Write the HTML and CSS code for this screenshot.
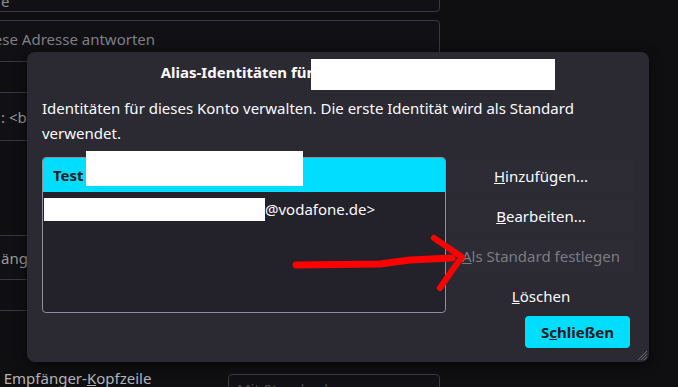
FILE: index.html
```html
<!DOCTYPE html>
<html lang="de">
<head>
    <meta charset="UTF-8">
    <meta name="viewport" content="width=device-width, initial-scale=1.0">
    <title>Alias-Identitäten</title>
    <link rel="stylesheet" href="styles.css">
</head>
<body>
    <div class="backdrop">
        <div class="field f1">e</div>
        <div class="field f2">An diese Adresse antworten</div>
        <div class="field f3">: &lt;b</div>
        <div class="field f4">änge</div>
        <div class="sep"></div>
        <div class="bottom-row">
            <span class="label">- Empfänger-<u>K</u>opfzeile</span>
            <div class="field f5">Mit Standard</div>
        </div>
    </div>

    <div class="dialog">
        <div class="title">
            <span>Alias-Identitäten für</span>
            <span class="redact title-redact"></span>
        </div>
        <p class="desc">Identitäten für dieses Konto verwalten. Die erste Identität wird als Standard verwendet.</p>
        <div class="main">
            <div class="list">
                <div class="row selected">Test</div>
                <span class="redact row-redact"></span>
                <div class="row"><span class="redact addr-redact"></span>@vodafone.de&gt;</div>
            </div>
            <div class="actions">
                <button class="btn"><u>H</u>inzufügen...</button>
                <button class="btn"><u>B</u>earbeiten...</button>
                <button class="btn" disabled><u>A</u>ls Standard festlegen</button>
                <button class="btn plain"><u>L</u>öschen</button>
            </div>
        </div>
        <div class="footer">
            <button class="primary">S<u>c</u>hließen</button>
        </div>
        <svg class="grip" width="10" height="10" viewBox="0 0 10 10">
            <path d="M10 1 L1 10 M10 4 L4 10 M10 7 L7 10" stroke="#6b6a72" stroke-width="1"/>
        </svg>
    </div>

    <svg class="arrow" width="678" height="387" viewBox="0 0 678 387">
        <path d="M296 265 L380 264 L410 260 L452 258" fill="none" stroke="#ff0000" stroke-width="7" stroke-linecap="round" stroke-linejoin="round"/>
        <path d="M434 238 L462 257 L451 272 L440 288" fill="none" stroke="#ff0000" stroke-width="6" stroke-linecap="round" stroke-linejoin="round"/>
    </svg>
</body>
</html>
```

FILE: styles.css
```css
body {
    margin: 0;
    width: 678px;
    height: 387px;
    overflow: hidden;
    position: relative;
    background-color: #0f0f12;
    font-family: "Noto Sans", sans-serif;
    font-size: 15px;
    color: #fbfbfe;
}
.backdrop {
    width: 460px;
    margin-left: -20px;
    display: flex;
    flex-direction: column;
    color: #8f8e95;
}
.field {
    box-sizing: border-box;
    border: 1px solid #3a3941;
    border-radius: 4px;
    background-color: #111014;
    padding-left: 20px;
    display: flex;
    align-items: center;
    white-space: nowrap;
}
.f1 {
    margin-top: -22px;
    height: 34px;
    align-items: flex-end;
}
.f2 {
    margin-top: 8px;
    height: 42px;
    padding-bottom: 4px;
    text-indent: -43px;
    color: #807f86;
}
.f3 {
    margin-top: 30px;
    height: 49px;
    color: #9a99a0;
}
.f4 {
    margin-top: 94px;
    height: 45px;
    color: #9a99a0;
}
.sep {
    margin-top: 30px;
    height: 1px;
    background-color: #3a3941;
}
.bottom-row {
    margin-top: 55px;
    display: flex;
    align-items: flex-start;
    color: #b3b2b8;
}
.bottom-row .label {
    margin-top: 2px;
    margin-left: 15px;
    width: 233px;
}
.f5 {
    height: 30px;
    width: 212px;
    margin-top: 8px;
    padding-left: 8px;
    color: #4a4950;
}
.dialog {
    position: absolute;
    left: 27px;
    top: 52px;
    width: 622px;
    height: 310px;
    box-sizing: border-box;
    padding: 0 15px 0 15px;
    background-color: #2b2a33;
    border-radius: 8px;
    box-shadow: 0 2px 12px rgba(0, 0, 0, 0.6);
}
.title {
    height: 40px;
    display: flex;
    align-items: center;
    justify-content: center;
    padding-left: 40px;
    font-weight: bold;
}
.redact {
    display: inline-block;
    background-color: #fff;
}
.title-redact {
    width: 244px;
    height: 31px;
    margin-left: -2px;
    margin-top: 4px;
}
.desc {
    margin: 4px 0 0;
    line-height: 25px;
}
.main {
    margin-top: 11px;
    display: flex;
    height: 156px;
}
.list {
    position: relative;
    width: 404px;
    box-sizing: border-box;
    border: 1px solid #8f8f9d;
    border-radius: 4px;
    background-color: #23222b;
}
.row {
    height: 34px;
    display: flex;
    align-items: center;
    padding-left: 10px;
    white-space: nowrap;
}
.row.selected {
    background-color: #00ddff;
    color: #1c1b22;
    font-weight: bold;
    border-radius: 3px 3px 0 0;
}
.row-redact {
    position: absolute;
    left: 43px;
    top: -7px;
    width: 217px;
    height: 35px;
}
.addr-redact {
    width: 221px;
    height: 23px;
    margin-left: -9px;
}
.actions {
    width: 186px;
    margin-left: 2px;
    padding-top: 3px;
    display: flex;
    flex-direction: column;
    gap: 8px;
}
.btn {
    height: 32px;
    padding: 0;
    font-family: inherit;
    font-size: 15px;
    color: #fbfbfe;
    background-color: #2d2c35;
    border: none;
    border-radius: 4px;
}
.btn.plain {
    background-color: #2b2a33;
}
.btn:disabled {
    color: #7c7b82;
}
.footer {
    margin-top: 3px;
    padding-right: 4px;
    display: flex;
    justify-content: flex-end;
}
.primary {
    width: 105px;
    height: 32px;
    padding: 0;
    font-family: inherit;
    font-size: 15px;
    font-weight: bold;
    color: #1c1b22;
    background-color: #00ddff;
    border: none;
    border-radius: 4px;
}
.grip {
    position: absolute;
    right: 2px;
    bottom: 2px;
}
.arrow {
    position: absolute;
    left: 0;
    top: 0;
}
```
